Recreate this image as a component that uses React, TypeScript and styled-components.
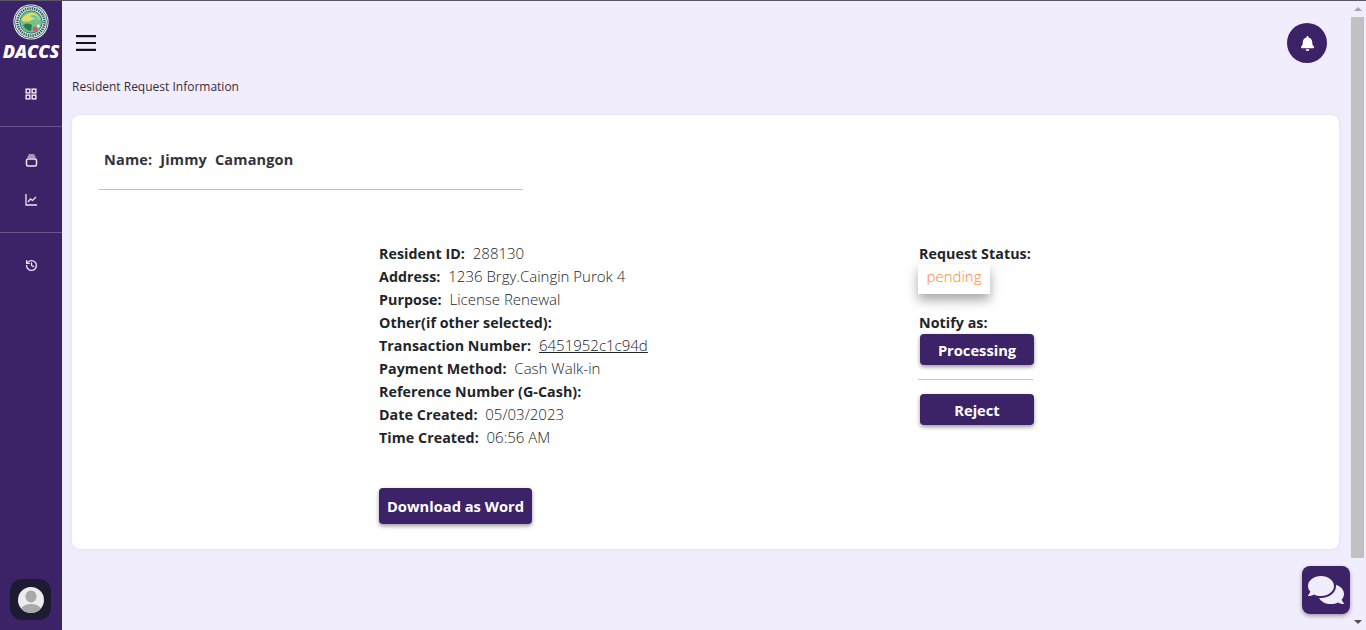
import React from "react";
import styled, { createGlobalStyle } from "styled-components";
import { FaBell, FaComments } from "react-icons/fa";
import { LuHistory } from "react-icons/lu";

const Global = createGlobalStyle`
  html, body { margin: 0; padding: 0; height: 100%; overflow: hidden; }
  body { font-family: "Open Sans", "Noto Sans", sans-serif; background: #f2edfc; color: #212529; }
  #root { height: 100%; }
`;

const Shell = styled.div`
  display: flex;
  height: 630px;
  border-top: 1px solid #5b5668;
  box-sizing: border-box;
  position: relative;
`;
const Sidebar = styled.aside`
  width: 62px;
  flex: none;
  background: #3c2368;
  display: flex;
  flex-direction: column;
  align-items: center;
`;
const Logo = styled.svg`
  width: 36px;
  height: 36px;
  margin-top: 3px;
  flex: none;
`;
const Brand = styled.div`
  font-family: "Open Sans", sans-serif;
  font-weight: 800;
  font-style: italic;
  font-size: 18px;
  line-height: 20px;
  color: #fff;
  letter-spacing: -0.1px;
  margin-top: 1px;
  white-space: nowrap;
`;
const NavGroup = styled.div<{ $h: number }>`
  width: 100%;
  height: ${(p) => p.$h}px;
  flex: none;
  box-sizing: border-box;
  display: flex;
  flex-direction: column;
  align-items: center;
  justify-content: center;
  gap: 26px;
  color: #ece6f6;
  & + & { border-top: 1px solid #6a5690; }
`;
const Spacer = styled.div`
  flex: 1;
`;
const Avatar = styled.div`
  width: 41px;
  height: 41px;
  border-radius: 12px;
  background: #1e1a32;
  margin: 0 1px 10px 0;
  display: flex;
  align-items: center;
  justify-content: center;
`;
const Main = styled.main`
  flex: 1;
  min-width: 0;
  padding: 0 10px;
  display: flex;
  flex-direction: column;
`;
const TopBar = styled.header`
  height: 77px;
  box-sizing: border-box;
  display: flex;
  align-items: flex-start;
  justify-content: space-between;
  padding: 22px 12px 0 4px;
  flex: none;
`;
const Burger = styled.svg`
  width: 20px;
  height: 16px;
  margin-top: 12px;
`;
const Bell = styled.div`
  width: 40px;
  height: 40px;
  border-radius: 50%;
  background: #3c2368;
  color: #fff;
  display: flex;
  align-items: center;
  justify-content: center;
`;
const Crumb = styled.div`
  font-size: 12px;
  line-height: 18px;
  color: #33303a;
  margin-bottom: 19px;
  flex: none;
`;
const Card = styled.section`
  width: 1267px;
  height: 434px;
  background: #fff;
  border-radius: 8px;
  box-shadow: 0 0 4px rgba(60, 35, 104, 0.08);
  box-sizing: border-box;
  padding: 33px 27px 0;
  flex: none;
`;
const Name = styled.h2`
  margin: 0;
  padding-left: 5px;
  font-size: 14.5px;
  line-height: 24px;
  font-weight: 700;
  letter-spacing: 0.17px;
  color: #33333a;
  white-space: pre;
`;
const NameRule = styled.hr`
  width: 424px;
  margin: 17px 0 0;
  border: 0;
  border-top: 1px solid #c4c2c8;
`;
const Columns = styled.div`
  display: flex;
  padding: 52px 0 0 280px;
`;
const Details = styled.div`
  width: 540px;
  flex: none;
`;
const Row = styled.div`
  font-size: 15px;
  line-height: 23px;
  white-space: pre;
  color: #212529;
  font-weight: 300;
`;
const Label = styled.b`
  font-size: 14.25px;
  font-weight: 700;
  letter-spacing: 0.06px;
  color: #212529;
`;
const Link = styled.span`
  text-decoration: underline;
`;
const PrimaryButton = styled.button<{ $w: number; $h: number }>`
  display: block;
  width: ${(p) => p.$w}px;
  height: ${(p) => p.$h}px;
  border: 0;
  border-radius: 4px;
  padding: 0;
  background: #3c2368;
  color: #fff;
  font-family: inherit;
  font-size: 14.7px;
  font-weight: 700;
  box-shadow: 0 2px 4px rgba(0, 0, 0, 0.4);
`;
const DownloadWrap = styled.div`
  margin-top: 39px;
`;
const Side = styled.div`
  width: 116px;
`;
const StatusBadge = styled.div`
  width: 72px;
  height: 30px;
  margin: -1px 0 0 -1px;
  background: #fff;
  color: #f58a2e;
  font-size: 15px;
  font-weight: 300;
  line-height: 25px;
  text-align: center;
  box-shadow: 0 6px 12px rgba(0, 0, 0, 0.35);
`;
const NotifyLabel = styled(Row)`
  margin-top: 17px;
`;
const ActionWrap = styled.div`
  padding-left: 1px;
`;
const ActionRule = styled.hr`
  width: 115px;
  margin: 14px 0 14px -2px;
  border: 0;
  border-top: 1px solid #c4c2c8;
`;
const Scrollbar = styled.div`
  width: 17px;
  flex: none;
  display: flex;
  flex-direction: column;
  align-items: center;
`;
const ScrollArrow = styled.div<{ $down?: boolean }>`
  width: 0;
  height: 0;
  margin: 6px 0;
  border-left: 4px solid transparent;
  border-right: 4px solid transparent;
  ${(p) => (p.$down ? "border-top: 4px solid #505050;" : "border-bottom: 4px solid #a3a3a3;")}
`;
const ScrollThumb = styled.div`
  width: 13px;
  height: 541px;
  background: #c1c1c1;
`;
const ScrollGap = styled.div`
  flex: 1;
`;
const ChatButton = styled.button`
  position: absolute;
  right: 16px;
  bottom: 16px;
  width: 48px;
  height: 48px;
  border: 0;
  padding: 0;
  border-radius: 8px;
  background: #3c2368;
  color: #f2edfc;
  display: flex;
  align-items: center;
  justify-content: center;
  box-shadow: 0 2px 4px rgba(0, 0, 0, 0.35);
`;

const GridIcon = () => (
  <svg width="12" height="12" viewBox="0 0 13 13" fill="none" stroke="currentColor" strokeWidth="1.6">
    <rect x="1.25" y="1.25" width="4" height="4" />
    <rect x="7.75" y="1.25" width="4" height="4" />
    <rect x="1.25" y="7.75" width="4" height="4" />
    <rect x="7.75" y="7.75" width="4" height="4" />
  </svg>
);
const StackIcon = () => (
  <svg width="13" height="13" viewBox="0 0 13 13" fill="none" stroke="currentColor">
    <path d="M3.5 1h6" strokeWidth="1.2" />
    <path d="M2.5 3h8" strokeWidth="1.2" />
    <rect x="1.5" y="5" width="10" height="7" rx="1.5" strokeWidth="1.5" />
  </svg>
);
const ChartIcon = () => (
  <svg width="13" height="13" viewBox="0 0 13 13" fill="none" stroke="currentColor" strokeWidth="1.3">
    <path d="M1 1v11h11" />
    <path d="M3 9l2.5-3 2 1.5L11 4" />
  </svg>
);

const App: React.FC = () => (
  <>
    <Global />
    <Shell>
      <Sidebar>
        <Logo viewBox="0 0 36 36">
          <circle cx="18" cy="18" r="17.6" fill="#f2f6f1" />
          <circle cx="18" cy="18" r="16.4" fill="#dfe9e4" stroke="#2f7a78" strokeWidth="1" />
          <circle cx="18" cy="18" r="13.6" fill="none" stroke="#35505c" strokeWidth="2.4" strokeDasharray="1.4 0.9" />
          <circle cx="18" cy="18" r="11.2" fill="#72c28a" stroke="#24606e" strokeWidth="0.8" />
          <path d="M8 16c3-5 9-8 13-7 3 1 5 3 6 7-4-2-7-1-10 1-3 1-6 1-9-1z" fill="#e6dc62" />
          <path d="M17 12c3-2 7-1 9 3-3 0-6-1-9-3z" fill="#4fc6d6" />
          <path d="M10 21c3-2 6-2 9 0l-1 6c-3 0-6-2-8-6z" fill="#2c7a52" />
          <circle cx="22" cy="25" r="2.4" fill="#cf5a6c" />
          <circle cx="25.5" cy="22" r="1.4" fill="#f2f6f1" />
        </Logo>
        <Brand>DACCS</Brand>
        <NavGroup $h={65}>
          <GridIcon />
        </NavGroup>
        <NavGroup $h={106}>
          <StackIcon />
          <ChartIcon />
        </NavGroup>
        <NavGroup $h={66}>
          <LuHistory size={13} strokeWidth={2.4} />
        </NavGroup>
        <Spacer />
        <Avatar>
          <svg width="26" height="26" viewBox="0 0 26 26">
            <defs>
              <clipPath id="avatar-clip"><circle cx="13" cy="13" r="13" /></clipPath>
            </defs>
            <circle cx="13" cy="13" r="13" fill="#ececec" />
            <g clipPath="url(#avatar-clip)" fill="#a9a9a9">
              <ellipse cx="13" cy="9.5" rx="5.5" ry="6" />
              <path d="M2 26c0-6 5-9 11-9s11 3 11 9z" />
            </g>
          </svg>
        </Avatar>
      </Sidebar>
      <Main>
        <TopBar>
          <Burger viewBox="0 0 20 16">
            <path d="M0 1.2h20M0 8h20M0 14.8h20" stroke="#14111c" strokeWidth="2.2" />
          </Burger>
          <Bell><FaBell size={15} /></Bell>
        </TopBar>
        <Crumb>Resident Request Information</Crumb>
        <Card>
          <Name>Name:  Jimmy  Camangon</Name>
          <NameRule />
          <Columns>
            <Details>
              <Row><Label>Resident ID:</Label>  288130</Row>
              <Row><Label>Address:</Label>  1236 Brgy.Caingin Purok 4</Row>
              <Row><Label>Purpose:</Label>  License Renewal</Row>
              <Row><Label>Other(if other selected):</Label></Row>
              <Row><Label>Transaction Number:</Label>  <Link>6451952c1c94d</Link></Row>
              <Row><Label>Payment Method:</Label>  Cash Walk-in</Row>
              <Row><Label>Reference Number (G-Cash):</Label></Row>
              <Row><Label>Date Created:</Label>  05/03/2023</Row>
              <Row><Label>Time Created:</Label>  06:56 AM</Row>
              <DownloadWrap>
                <PrimaryButton $w={153} $h={36}>Download as Word</PrimaryButton>
              </DownloadWrap>
            </Details>
            <Side>
              <Row><Label>Request Status:</Label></Row>
              <StatusBadge>pending</StatusBadge>
              <NotifyLabel><Label>Notify as:</Label></NotifyLabel>
              <ActionWrap>
                <PrimaryButton $w={114} $h={31}>Processing</PrimaryButton>
                <ActionRule />
                <PrimaryButton $w={114} $h={31}>Reject</PrimaryButton>
              </ActionWrap>
            </Side>
          </Columns>
        </Card>
      </Main>
      <Scrollbar>
        <ScrollArrow />
        <ScrollThumb />
        <ScrollGap />
        <ScrollArrow $down />
      </Scrollbar>
      <ChatButton><FaComments size={36} /></ChatButton>
    </Shell>
  </>
);

export default App;
